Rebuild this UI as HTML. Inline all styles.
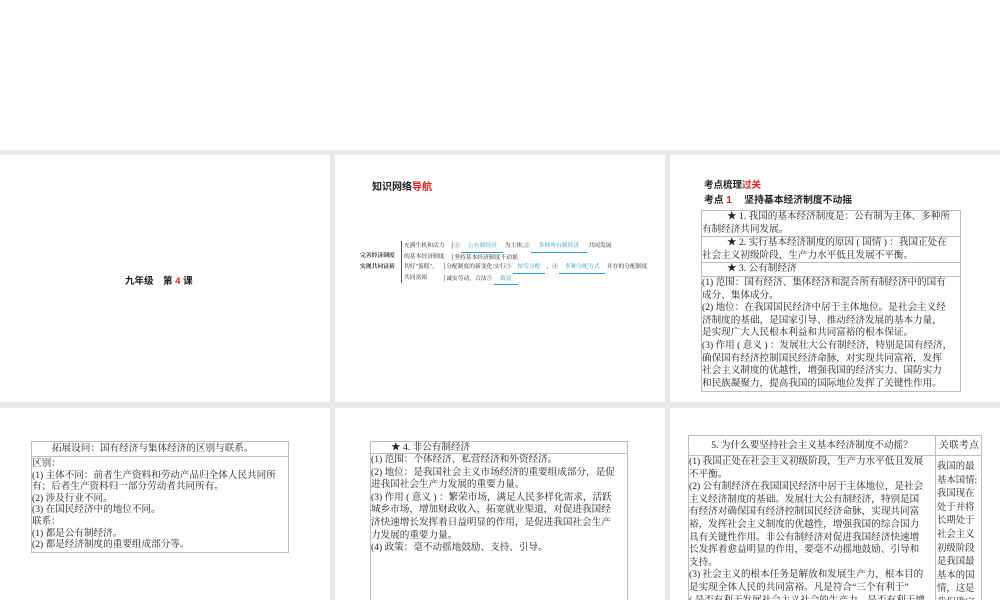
<!DOCTYPE html>
<html><head><meta charset="utf-8"><style>
*{margin:0;padding:0;box-sizing:border-box}
body{width:1000px;height:600px;background:#e9e9e9;position:relative;overflow:hidden;font-family:"Liberation Serif","Noto Serif CJK SC",serif;color:#222}
.p{position:absolute;background:#fff;overflow:hidden}
.a{position:absolute;white-space:nowrap}
.box{position:absolute;border:1px solid #bdbdbd;font-size:9.6px;line-height:12.6px}
.row{border-bottom:1px solid #bdbdbd}
.r{color:#e02020}
.b{font-weight:bold;font-family:"Liberation Sans","Noto Sans CJK SC",sans-serif}
.s{font-size:5.8px;line-height:10.5px;font-family:"Liberation Serif","Noto Serif CJK SC",serif}
.u{color:#2a9ad0;border-bottom:1px solid #2a9ad0;display:inline-block;text-align:center}
</style></head><body>
<div class="p" style="left:0;top:0;width:1000px;height:150px"></div>
<div class="p" style="left:0;top:155px;width:330px;height:247px">
 <div class="a b" style="left:125px;top:118px;font-size:9.5px">九年级　第 <span class="r">4</span> 课</div>
</div>
<div class="p" style="left:335px;top:155px;width:330px;height:247px">
 <div class="a b" style="left:37px;top:23px;font-size:10px">知识网络<span class="r">导航</span></div>
 <div class="a s b" style="left:25px;top:96px">完善经济制度</div>
 <div class="a s b" style="left:25px;top:107px">实现共同富裕</div>
 <div class="a s" style="left:66px;top:86px;border-left:1px solid #555;padding-left:2px">充满生机和活力<br>的基本经济制度<br>切好"蛋糕"、<br>共同富裕</div>
 <div class="a s" style="left:115px;top:86px">│① <span class="u" style="width:42px">公有制经济</span> 为主体,② <span class="u" style="width:56px">多种所有制经济</span> 共同发展<br>│坚持基本经济制度不动摇</div>
 <div class="a s" style="left:107px;top:107px">│分配制度的新变化:实行③ <span class="u" style="width:32px">按劳分配</span> 、④ <span class="u" style="width:46px">多种分配方式</span> 并存的分配制度<br>│诚实劳动，合法⑤ <span class="u" style="width:24px">致富</span></div>
</div>
<div class="p" style="left:670px;top:155px;width:330px;height:247px">
 <div class="a b" style="left:34px;top:22px;font-size:9.5px">考点梳理<span class="r">过关</span></div>
 <div class="a b" style="left:34px;top:37px;font-size:9.8px">考点 <span class="r">1</span>　 坚持基本经济制度不动摇</div>
 <div class="box" style="left:31px;top:55px;width:260px;height:182px">
  <div class="row" style="padding-left:25px">★ 1. 我国的基本经济制度是：公有制为主体、多种所<br><span style="margin-left:-25px">有制经济共同发展。</span></div>
  <div class="row" style="padding-left:25px">★ 2. 实行基本经济制度的原因 ( 国情 ) ：我国正处在<br><span style="margin-left:-25px">社会主义初级阶段，生产力水平低且发展不平衡。</span></div>
  <div class="row" style="padding-left:25px">★ 3. 公有制经济</div>
  <div>(1) 范围：国有经济、集体经济和混合所有制经济中的国有<br>成分、集体成分。<br>(2) 地位：在我国国民经济中居于主体地位。是社会主义经<br>济制度的基础，是国家引导、推动经济发展的基本力量，<br>是实现广大人民根本利益和共同富裕的根本保证。<br>(3) 作用 ( 意义 ) ：发展壮大公有制经济，特别是国有经济，<br>确保国有经济控制国民经济命脉，对实现共同富裕，发挥<br>社会主义制度的优越性，增强我国的经济实力、国防实力<br>和民族凝聚力，提高我国的国际地位发挥了关键性作用。</div>
 </div>
</div>
<div class="p" style="left:0;top:408px;width:330px;height:192px">
 <div class="box" style="left:31px;top:33px;width:258px;height:112px;line-height:11.6px">
  <div class="row" style="padding-left:20px;height:15px;line-height:14px">拓展设问：国有经济与集体经济的区别与联系。</div>
  <div style="padding-top:1px">区别：<br>(1) 主体不同：前者生产资料和劳动产品归全体人民共同所<br>有；后者生产资料归一部分劳动者共同所有。<br>(2) 涉及行业不同。<br>(3) 在国民经济中的地位不同。<br>联系：<br>(1) 都是公有制经济。<br>(2) 都是经济制度的重要组成部分等。</div>
 </div>
</div>
<div class="p" style="left:335px;top:408px;width:330px;height:192px">
 <div class="box" style="left:35px;top:33px;width:258px;height:170px">
  <div class="row" style="padding-left:20px;height:12px;line-height:11px">★ 4. 非公有制经济</div>
  <div>(1) 范围：个体经济、私营经济和外资经济。<br>(2) 地位：是我国社会主义市场经济的重要组成部分，是促<br>进我国社会生产力发展的重要力量。<br>(3) 作用 ( 意义 ) ：繁荣市场，满足人民多样化需求，活跃<br>城乡市场，增加财政收入，拓宽就业渠道，对促进我国经<br>济快速增长发挥着日益明显的作用，是促进我国社会生产<br>力发展的重要力量。<br>(4) 政策：毫不动摇地鼓励、支持、引导。</div>
 </div>
</div>
<div class="p" style="left:670px;top:408px;width:330px;height:192px">
 <div class="box" style="left:18px;top:27px;width:294px;height:180px">
  <div class="row" style="height:20px;line-height:19px;display:flex"><div style="width:247px;text-align:center;border-right:1px solid #bdbdbd">5. 为什么要坚持社会主义基本经济制度不动摇？</div><div style="padding-left:3px;letter-spacing:0.5px">关联考点</div></div>
  <div style="display:flex"><div style="width:247px;border-right:1px solid #bdbdbd;height:160px">(1) 我国正处在社会主义初级阶段，生产力水平低且发展<br>不平衡。<br>(2) 公有制经济在我国国民经济中居于主体地位，是社会<br>主义经济制度的基础。发展壮大公有制经济，特别是国<br>有经济对确保国有经济控制国民经济命脉，实现共同富<br>裕，发挥社会主义制度的优越性，增强我国的综合国力<br>具有关键性作用。非公有制经济对促进我国经济快速增<br>长发挥着愈益明显的作用，要毫不动摇地鼓励、引导和<br>支持。<br>(3) 社会主义的根本任务是解放和发展生产力，根本目的<br>是实现全体人民的共同富裕。凡是符合“三个有利于”<br>( 是否有利于发展社会主义社会的生产力，是否有利于增</div>
  <div style="padding:5px 0 0 1px;font-size:9.4px;line-height:13.6px;width:44px;white-space:normal">我国的最基本国情:我国现在处于并将长期处于社会主义初级阶段是我国最基本的国情，这是我们确定我国基本</div></div>
 </div>
</div>
</body></html>
